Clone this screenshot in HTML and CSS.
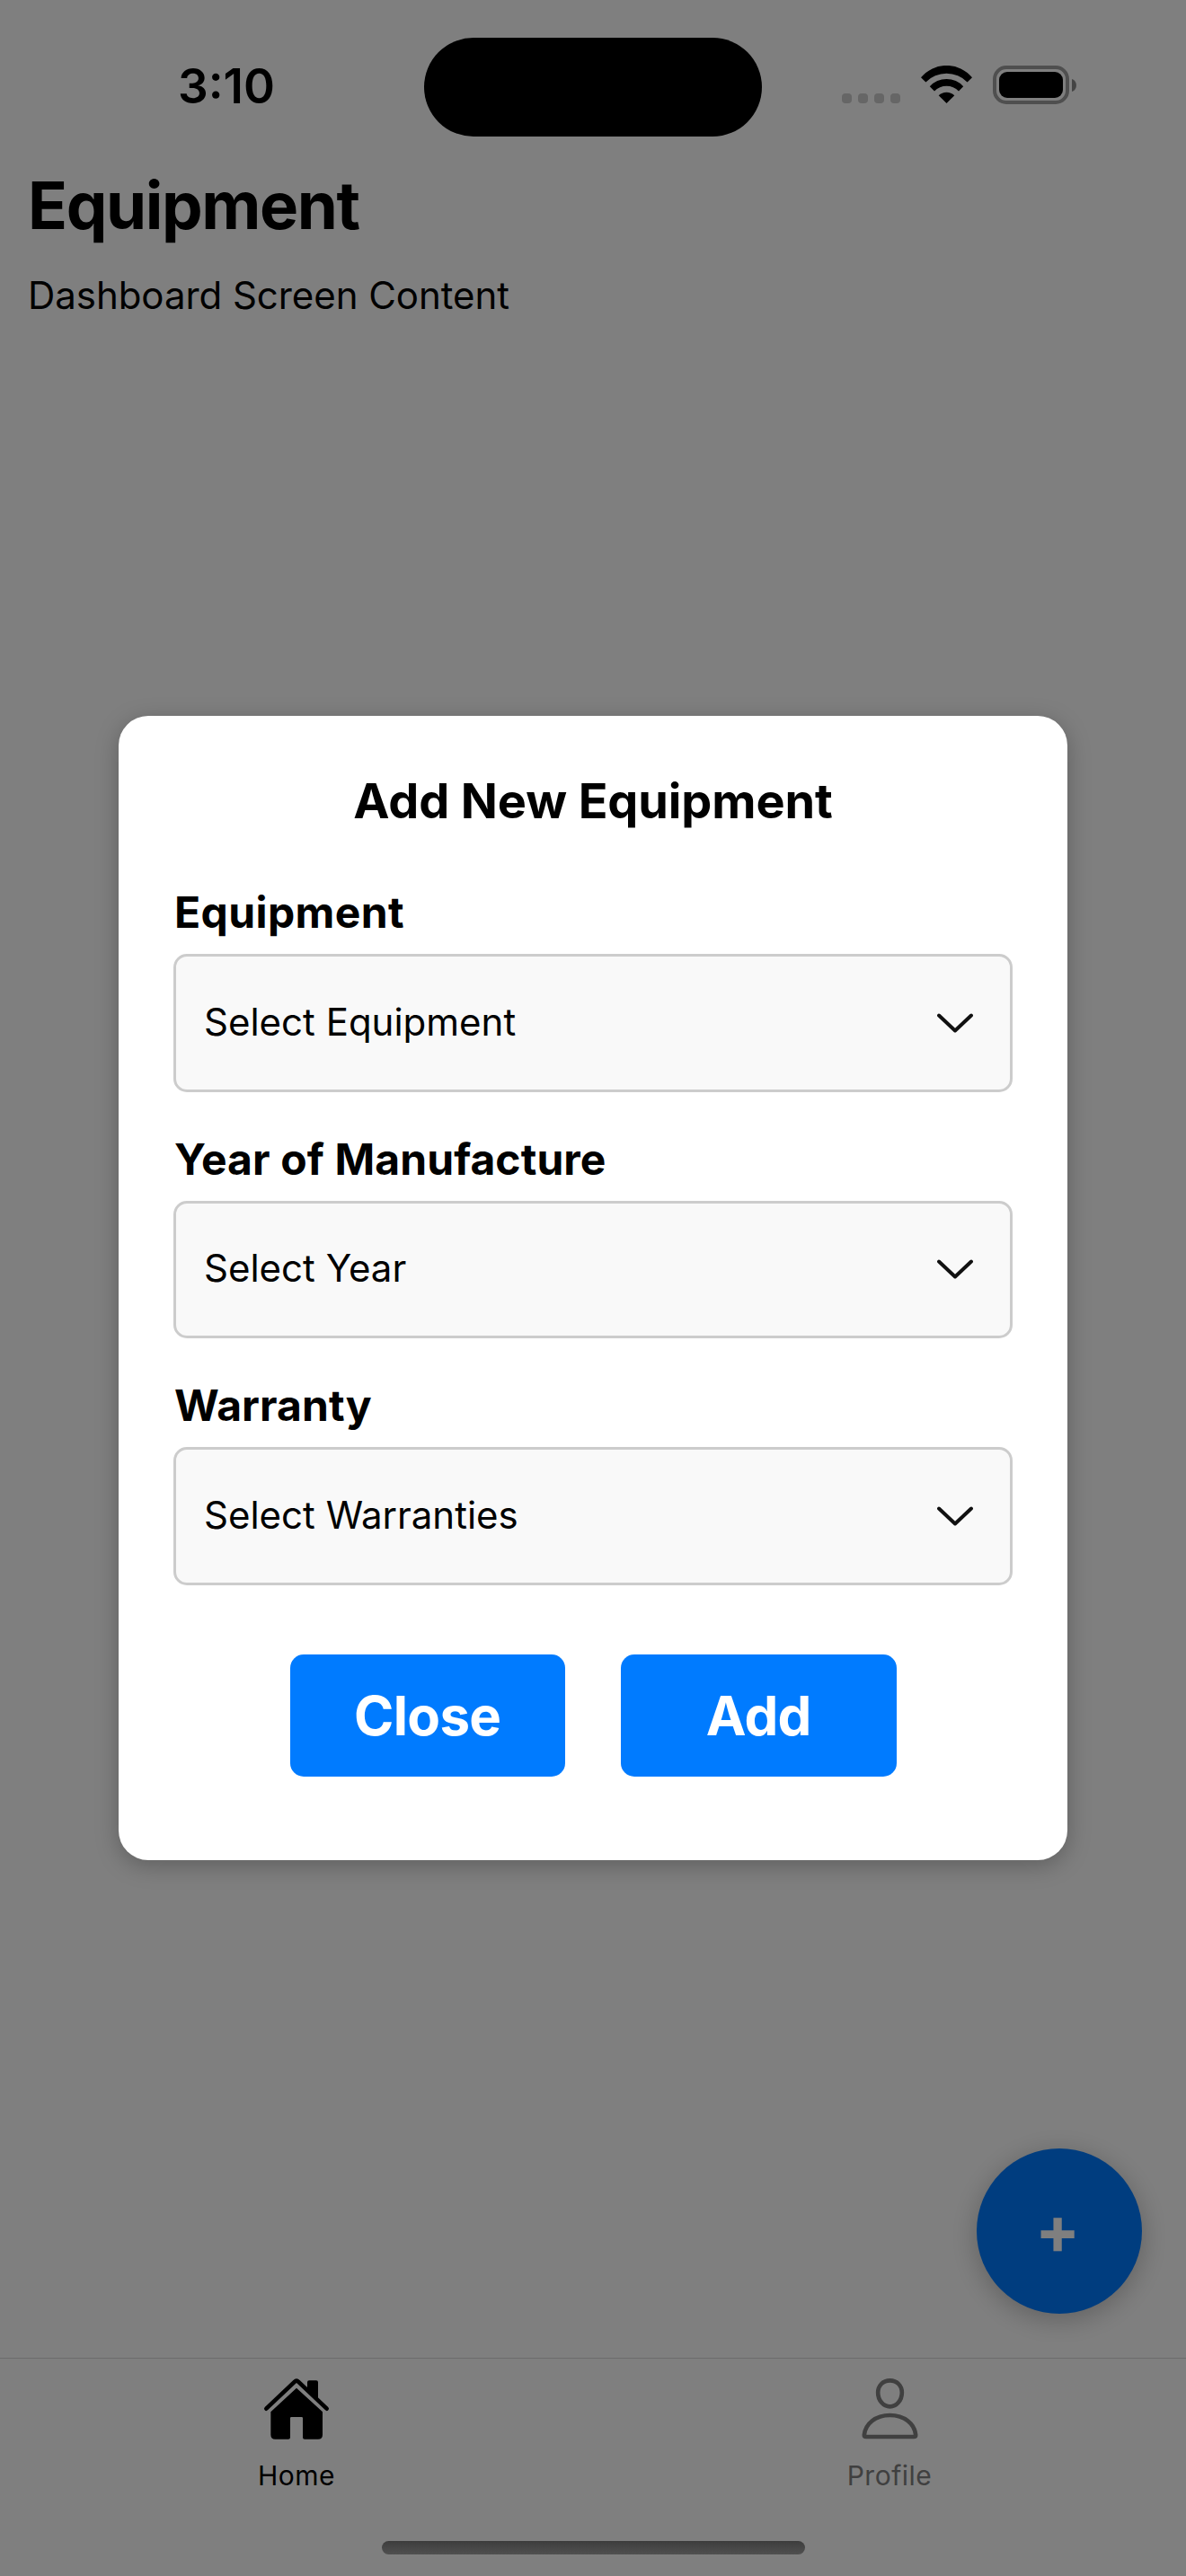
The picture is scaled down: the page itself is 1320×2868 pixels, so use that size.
FILE: index.html
```html
<!DOCTYPE html>
<html lang="en">
<head>
<meta charset="utf-8">
<title>Equipment</title>
<link rel="stylesheet" href="styles.css">
</head>
<body>
<div class="screen">
  <header class="status-bar">
    <span class="clock">3:10</span>
    <span class="island"></span>
    <div class="status-icons">
      <div class="signal"><i></i><i></i><i></i><i></i></div>
      <svg class="wifi" viewBox="125 33 57 42"><path d="M125 46.3A37 37 0 0 1 182 46.3L176.600 51.500A32.500 32.500 0 0 0 130.400 51.500Z"/><path d="M134.800 56.300A25 25 0 0 1 172.200 56.300L167 61.500A19 19 0 0 0 140 61.500Z"/><path d="M144.700 66.300A12.500 12.500 0 0 1 162.300 66.300L153.500 75Z"/></svg>
      <svg class="battery" viewBox="0 0 93 43"><rect x="2" y="2" width="81" height="39" rx="13" fill="none" stroke="#9e9e9e" stroke-width="4"/><rect x="7" y="7" width="71" height="29" rx="9"/><path d="M88 15C94.600 17 94.600 27 88 29Z" fill="#888"/></svg>
    </div>
  </header>
  <main class="content">
    <h1 class="page-title">Equipment</h1>
    <p class="page-text">Dashboard Screen Content</p>
  </main>
  <button class="fab">+</button>
  <nav class="tab-bar">
    <a class="tab tab-active">
      <svg class="home-icon" viewBox="186 108 228 216"><path d="M199 215L294 125Q300 118 306 125L401 215" fill="none" stroke="#000" stroke-width="14" stroke-linecap="round"/><path d="M336 150V127q0-6 6-6h24q6 0 6 6V186z"/><path d="M300 146L387 226V302q0 15-15 15H327q-6 0-6-6V247q0-4-4-4H283q-4 0-4 4V311q0 6-6 6H229q-15 0-15-15V226z"/></svg>
      <span>Home</span>
    </a>
    <a class="tab">
      <svg class="profile-icon" viewBox="170 108 200 216" fill="none" stroke="#808080" stroke-width="14"><path d="M270 121C294 121 310 139 310 161C310 187 292 208 270 208C248 208 230 187 230 161C230 139 246 121 270 121Z"/><path d="M184 303C188 265 222 237 270 237C318 237 352 265 356 303q0 6-6 6H190q-6 0-6-6Z"/></svg>
      <span>Profile</span>
    </a>
  </nav>
</div>
<div class="backdrop">
  <section class="modal">
    <h2 class="modal-title">Add New Equipment</h2>
    <div class="field">
      <label class="label-wide">Equipment</label>
      <div class="select"><span>Select Equipment</span><svg class="chevron" viewBox="0 0 40 22"><path d="M2 2.500L20 19.500L38 2.500"/></svg></div>
    </div>
    <div class="field">
      <label>Year of Manufacture</label>
      <div class="select"><span>Select Year</span><svg class="chevron" viewBox="0 0 40 22"><path d="M2 2.500L20 19.500L38 2.500"/></svg></div>
    </div>
    <div class="field">
      <label>Warranty</label>
      <div class="select"><span>Select Warranties</span><svg class="chevron" viewBox="0 0 40 22"><path d="M2 2.500L20 19.500L38 2.500"/></svg></div>
    </div>
    <div class="actions">
      <button class="btn">Close</button>
      <button class="btn">Add</button>
    </div>
  </section>
  <div class="home-indicator"></div>
</div>
</body>
</html>
```
FILE: styles.css
```css
* { box-sizing: border-box; }
body {
  margin: 0;
  font-family: Inter, "Liberation Sans", sans-serif;
  color: #000;
  background: #fff;
}
h1, h2, p { margin: 0; }
button { border: 0; padding: 0; font-family: inherit; }
svg { display: block; flex: none; }

.screen {
  position: relative;
  display: flex;
  flex-direction: column;
  width: 1320px;
  height: 2868px;
  background: #fff;
}

.status-bar {
  display: grid;
  grid-template-columns: 472px 376px 472px;
  height: 186px;
}
.clock {
  margin: 64px 0 0 198px;
  font-size: 53px;
  line-height: 64px;
  font-weight: 600;
}
.island {
  height: 110px;
  margin-top: 42px;
  border-radius: 55px;
  background: #000;
}
.status-icons {
  display: flex;
  align-items: flex-start;
  padding: 73px 0 0 89px;
}
.signal {
  display: flex;
  gap: 7px;
  margin: 31px 23px 0 0;
}
.signal i {
  width: 11px;
  height: 11px;
  border-radius: 4px;
  background: #ccc;
}
.wifi { width: 57px; height: 42px; margin-right: 23px; }
.battery { width: 93px; height: 43px; }

.content {
  flex: 1;
  padding: 0 31px;
}
.page-title {
  font-size: 72.5px;
  line-height: 86px;
  font-weight: 700;
  letter-spacing: -1.4px;
}
.page-text {
  margin-top: 32px;
  font-size: 42px;
  line-height: 50px;
  letter-spacing: -0.05px;
}

.fab {
  position: absolute;
  right: 49px;
  bottom: 292px;
  width: 184px;
  height: 184px;
  padding: 0 4px 4px 0;
  border-radius: 50%;
  background: #007bff;
  color: #fff;
  font-size: 74px;
  line-height: 180px;
  font-weight: 700;
  box-shadow: 0 6px 30px rgba(0, 0, 0, 0.25);
}

.tab-bar {
  display: grid;
  grid-template-columns: 1fr 1fr;
  height: 243px;
  border-top: 1px solid #d8d8d8;
}
.tab {
  display: flex;
  flex-direction: column;
  align-items: center;
  padding-top: 20px;
  color: #808080;
  font-size: 30px;
  line-height: 36px;
  letter-spacing: 0.5px;
}
.tab-active { color: #000; }
.home-icon { width: 76px; height: 72px; margin-bottom: 20px; }
.profile-icon { width: 67px; height: 72px; margin-bottom: 20px; }

.backdrop {
  position: absolute;
  inset: 0;
  display: flex;
  flex-direction: column;
  align-items: center;
  justify-content: space-between;
  width: 1320px;
  height: 2868px;
  padding: 797px 0 24px;
  background: rgba(0, 0, 0, 0.5);
}
.modal {
  display: flex;
  flex-direction: column;
  width: 1056px;
  height: 1274px;
  padding: 63px 61px 0;
  border-radius: 33px;
  background: #fff;
  box-shadow: 0 6px 26px rgba(0, 0, 0, 0.25);
}
.modal-title {
  margin-bottom: 63px;
  font-size: 54px;
  line-height: 64px;
  font-weight: 700;
  letter-spacing: -0.1px;
  text-align: center;
}
.field { margin-bottom: 46px; }
.field label {
  display: block;
  margin: 0 0 17px 1px;
  font-size: 48px;
  line-height: 58px;
  font-weight: 700;
  letter-spacing: 0.1px;
}
.field .label-wide { letter-spacing: 0.4px; }
.select {
  display: flex;
  align-items: center;
  justify-content: space-between;
  height: 153.6px;
  padding: 0 41px 0 31px;
  border: 3px solid #ccc;
  border-radius: 15px;
  background: #f9f9f9;
  font-size: 42px;
  line-height: 50px;
}
.select span { padding-bottom: 2px; }
.chevron {
  width: 40px;
  height: 22px;
  fill: none;
  stroke: #111;
  stroke-width: 4;
  stroke-linecap: round;
  stroke-linejoin: round;
}
.actions {
  display: flex;
  justify-content: center;
  gap: 62px;
  margin-top: 31px;
}
.btn {
  width: 306.5px;
  height: 136px;
  border-radius: 15px;
  background: #007bff;
  color: #fff;
  font-size: 60px;
  line-height: 136px;
  font-weight: 700;
  letter-spacing: -0.7px;
}
.home-indicator {
  width: 471px;
  height: 15px;
  border-radius: 8px;
  background: linear-gradient(#3d3d3d, #505050);
}
```
